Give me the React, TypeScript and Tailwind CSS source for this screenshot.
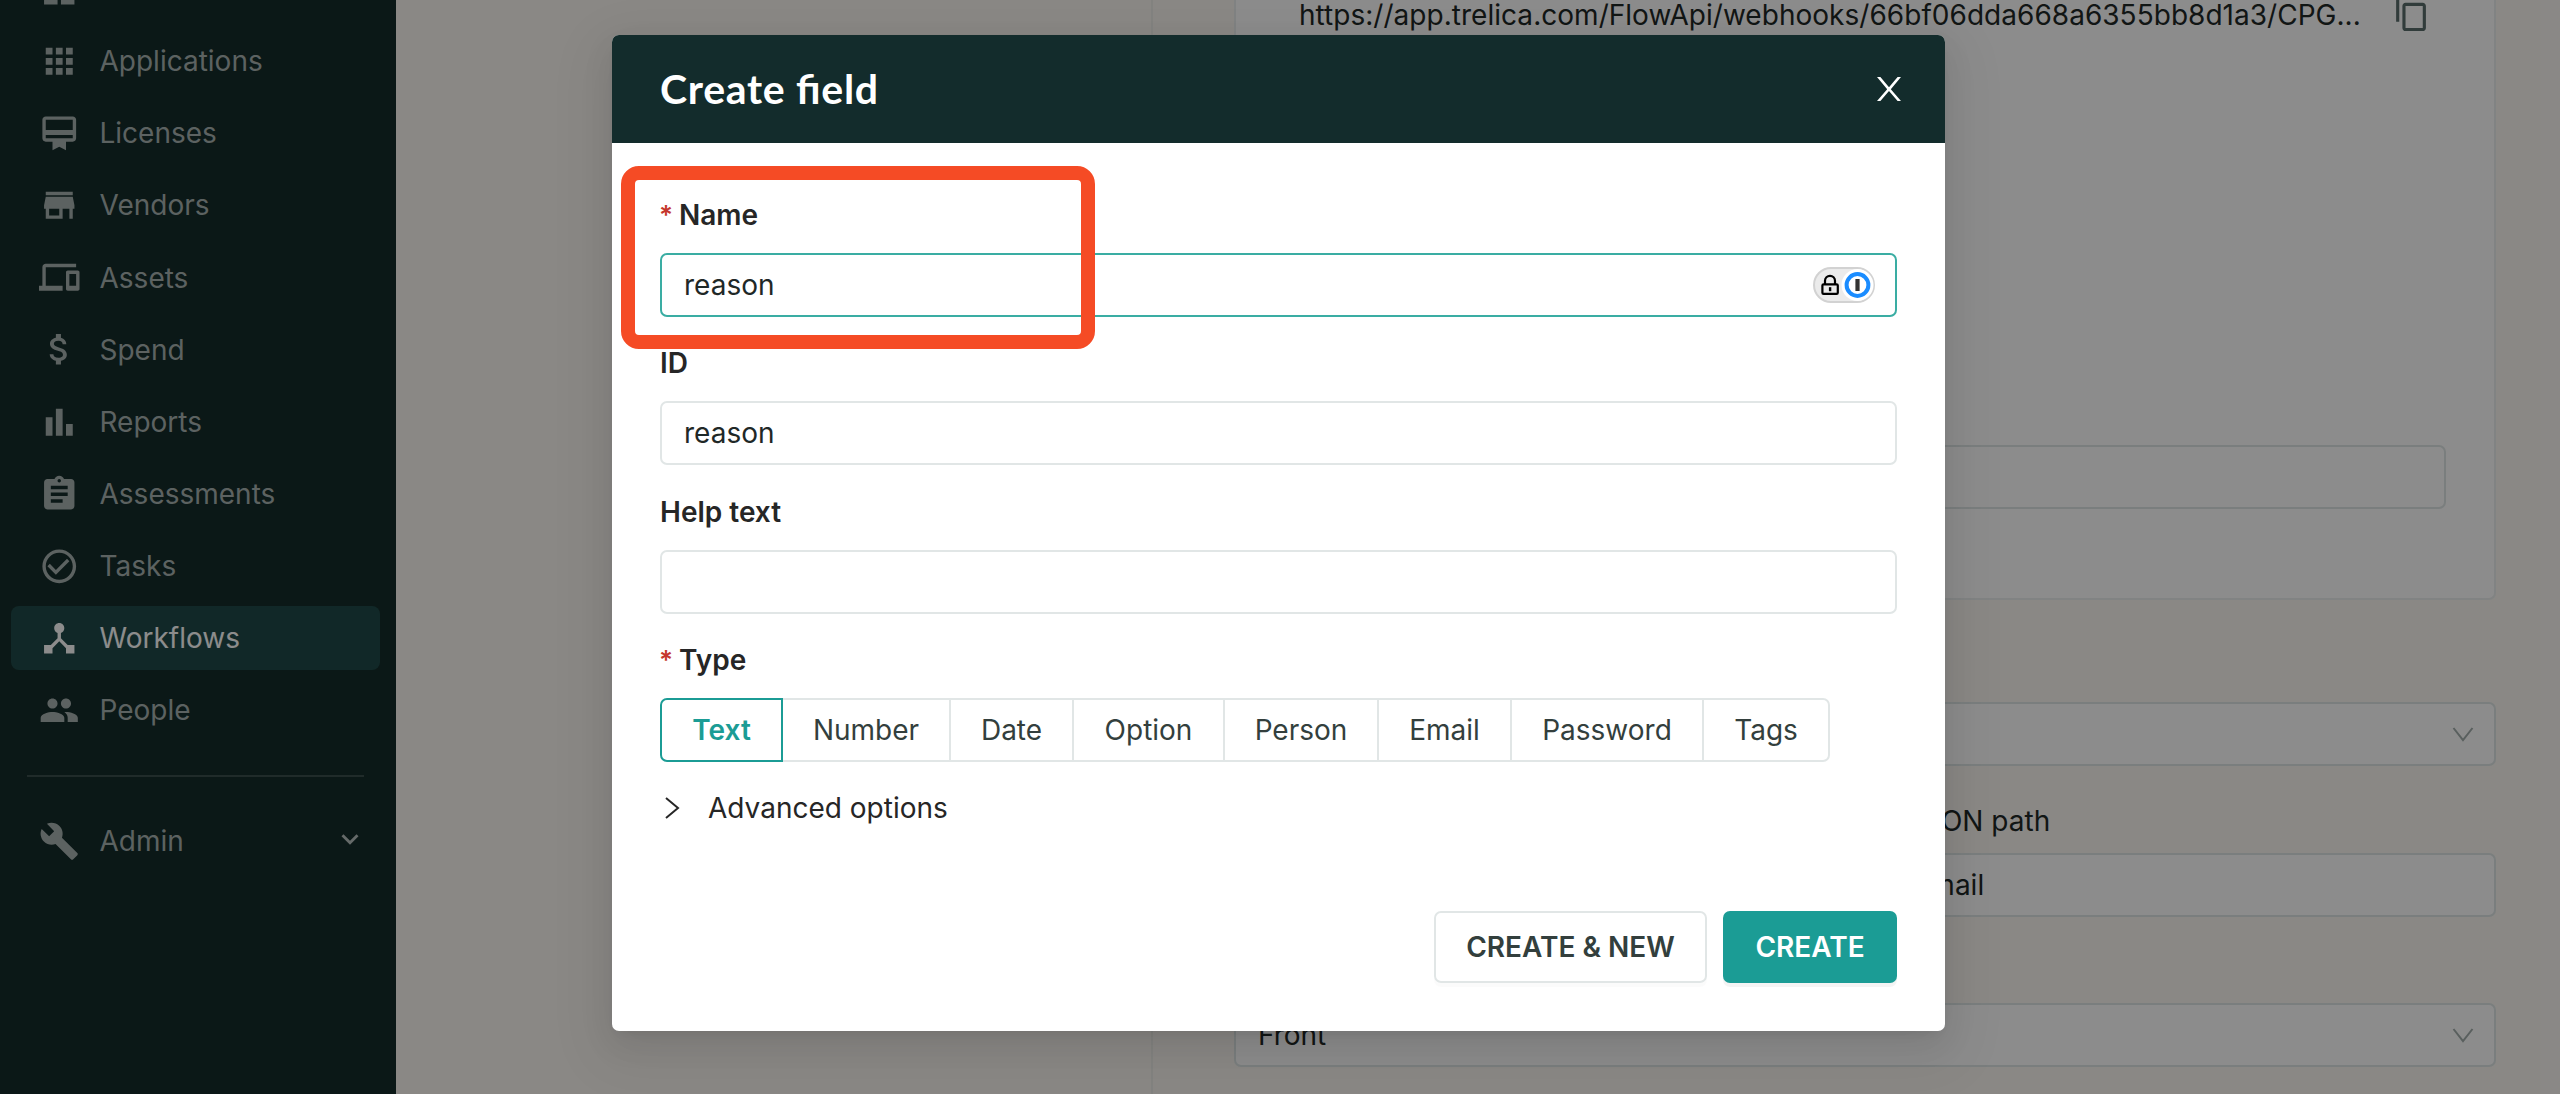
import type { ReactNode } from "react";
import { clsx } from "clsx";
import type { IconType } from "react-icons";
import {
  MdApps,
  MdAssignment,
  MdAttachMoney,
  MdBarChart,
  MdBuild,
  MdCardMembership,
  MdCheckCircleOutline,
  MdContentCopy,
  MdDashboard,
  MdDeviceHub,
  MdDevices,
  MdExpandMore,
  MdPeople,
  MdStore,
} from "react-icons/md";

type NavEntry = { label?: string; icon: IconType; active?: boolean };

const navItems: NavEntry[] = [
  { label: "Applications", icon: MdApps },
  { label: "Licenses", icon: MdCardMembership },
  { label: "Vendors", icon: MdStore },
  { label: "Assets", icon: MdDevices },
  { label: "Spend", icon: MdAttachMoney },
  { label: "Reports", icon: MdBarChart },
  { label: "Assessments", icon: MdAssignment },
  { label: "Tasks", icon: MdCheckCircleOutline },
  { label: "Workflows", icon: MdDeviceHub, active: true },
  { label: "People", icon: MdPeople },
];

const fieldTypes = [
  { label: "Text", width: "w-[123px]" },
  { label: "Number", width: "w-[168px]" },
  { label: "Date", width: "w-[123px]" },
  { label: "Option", width: "w-[151px]" },
  { label: "Person", width: "w-[154px]" },
  { label: "Email", width: "w-[133px]" },
  { label: "Password", width: "w-[192px]" },
  { label: "Tags", width: "w-[126px]" },
];

function NavItem({ label, icon: Icon, active }: NavEntry) {
  return (
    <a
      className={clsx(
        "flex h-16 shrink-0 items-center rounded-lg pl-[28px]",
        active ? "bg-[#204a49] text-white" : "text-[#a8b2b1]"
      )}
    >
      <Icon className="size-[40.5px] shrink-0" />
      <span className="ml-[20px]">{label}</span>
    </a>
  );
}

function Sidebar() {
  return (
    <aside className="flex w-[396px] shrink-0 flex-col bg-[#142c2a] text-[28px] leading-[44px]">
      <nav className="-mt-[43px] ml-[11px] flex w-[369px] flex-col gap-[8.15px]">
        <NavItem icon={MdDashboard} />
        {navItems.map((item) => (
          <NavItem key={item.label} {...item} />
        ))}
      </nav>
      <div className="mt-[32.5px] ml-[27px] h-[2px] w-[337px] bg-[#3b4f4d]" />
      <div className="mt-[32px] ml-[11px] flex w-[369px] items-center">
        <div className="flex-1">
          <NavItem label="Admin" icon={MdBuild} />
        </div>
        <MdExpandMore className="mr-[13px] mb-1 size-[34px] text-[#b9c1c0]" />
      </div>
    </aside>
  );
}

function DownArrow() {
  return (
    <svg className="h-[15px] w-[22px]" viewBox="0 0 22 15" fill="none">
      <path d="M1.5 1 11 13.2 20.5 1" stroke="#a3aeac" strokeWidth="2" />
    </svg>
  );
}

function Select({ value }: { value?: string }) {
  return (
    <div className="flex h-16 items-center justify-between rounded-[7px] border-2 border-[#dfe6e5] bg-white pr-[20px] pl-[22px]">
      <span>{value}</span>
      <DownArrow />
    </div>
  );
}

function WorkflowPage() {
  return (
    <main className="flex flex-1 bg-[#fbf8f3] text-[28px] leading-[44px] text-[#1f2827]">
      <div className="w-[757px] border-r-2 border-[#efeeea]" />
      <div className="ml-[81px] w-[1262px]">
        <section className="flex h-[600px] flex-col rounded-b-[7px] border-2 border-t-0 border-[#ecefee] bg-white px-[48px]">
          <div className="flex h-[37px] items-start pl-[15px]">
            <span className="w-[1062px] pt-px leading-[28px] tracking-[0.03px] whitespace-nowrap">
              https://app.trelica.com/FlowApi/webhooks/66bf06dda668a6355bb8d1a3/CPG...
            </span>
            <MdContentCopy className="-mt-[5px] ml-[32px] size-[37.6px] shrink-0 text-[#5a6d6c]" />
          </div>
          <div className="mt-[408px] h-16 shrink-0 rounded-[7px] border-2 border-[#dfe6e5]" />
        </section>
        <div className="mt-[102px]">
          <Select />
        </div>
        <div className="mt-[33px] flex gap-4">
          <div className="flex-1" />
          <div className="w-[632px]">
            <div className="pl-[43px]">JSON path</div>
            <div className="mt-[10px] flex h-16 items-center rounded-[7px] border-2 border-[#dfe6e5] bg-white pl-[22px]">
              $.email
            </div>
          </div>
        </div>
        <div className="mt-[86px]">
          <Select value="Front" />
        </div>
      </div>
    </main>
  );
}

function Field({ label, required, children }: { label: string; required?: boolean; children: ReactNode }) {
  return (
    <div>
      <div className="mb-4 flex h-[44px] font-semibold text-[#262626]">
        {required && <span className="mr-[9px] -ml-px w-[11px] text-[26px] text-[#c5372c]">*</span>}
        {label}
      </div>
      {children}
    </div>
  );
}

function TextInput({ value, focused, children }: { value?: string; focused?: boolean; children?: ReactNode }) {
  return (
    <div
      className={clsx(
        "flex h-16 items-center justify-between rounded-[7px] border-2 pr-[20px] pl-[22px]",
        focused ? "border-[#3aada3]" : "border-[#e1e6e6]"
      )}
    >
      <span>{value}</span>
      {children}
    </div>
  );
}

function PasswordManagerBadge() {
  return (
    <svg className="h-[36px] w-[62px]" viewBox="0 0 62 36" fill="none">
      <rect x="1" y="1" width="60" height="34" rx="17" fill="#ebebeb" stroke="#d2d2d2" strokeWidth="2" />
      <circle cx="44.5" cy="18" r="16" fill="#fff" />
      <circle cx="44.5" cy="18" r="10.9" fill="#fff" stroke="#1a8cff" strokeWidth="4" />
      <rect x="42.4" y="12" width="4.2" height="12" fill="#333" />
      <path d="M12 17v-3.2a5 5 0 0 1 10 0V17" stroke="#000" strokeWidth="2.2" />
      <rect x="9.4" y="17.3" width="15.4" height="9.6" rx="1.2" stroke="#000" strokeWidth="2.2" />
      <path d="M17.1 20.2v4" stroke="#000" strokeWidth="2.4" />
    </svg>
  );
}

function CreateFieldModal() {
  return (
    <div className="relative mt-[35px] ml-[612px] flex h-[996px] w-[1333px] flex-col overflow-hidden rounded-[7px] bg-white text-[28px] leading-[44px] text-[#1f2827] shadow-[0_12px_32px_0_rgba(0,0,0,0.08),0_6px_12px_-8px_rgba(0,0,0,0.12),0_18px_56px_16px_rgba(0,0,0,0.05)]">
      <header className="flex h-[108px] shrink-0 items-center justify-between bg-[#132c2c] pr-[44px] pl-[48px]">
        <h2 className="font-['Lato',sans-serif] text-[41px] font-bold tracking-[0.7px] text-white [font-feature-settings:'liga']">
          Create field
        </h2>
        <svg className="size-[24px]" viewBox="0 0 24 24" fill="#fff">
          <path d="M0 0h3.4L12 10.2 20.6 0H24L13.8 12.2 24 24h-3.4L12 14.1 3.4 24H0L10.2 12.2z" />
        </svg>
      </header>

      <div className="flex flex-1 flex-col pt-[50px] pr-[48px] pl-[48px]">
        <div className="flex flex-col gap-[24.4px]">
          <Field label="Name" required>
            <TextInput value="reason" focused>
              <PasswordManagerBadge />
            </TextInput>
          </Field>
          <Field label="ID">
            <TextInput value="reason" />
          </Field>
          <Field label="Help text">
            <TextInput />
          </Field>
          <Field label="Type" required>
            <div className="flex h-16">
              {fieldTypes.map((type, i) => (
                <button
                  key={type.label}
                  className={clsx(
                    "flex h-16 items-center justify-center border-y-2 border-r-2",
                    type.width,
                    i === 0
                      ? "rounded-l-[7px] border-l-2 border-[#1b9c95] font-semibold text-[#1b9c95]"
                      : "border-[#e1e6e6] text-[#333f3d]",
                    i === fieldTypes.length - 1 && "rounded-r-[7px]"
                  )}
                >
                  {type.label}
                </button>
              ))}
            </div>
          </Field>
        </div>

        <div className="mt-[24px] flex items-center text-[#262626]">
          <svg className="ml-[5px] h-[22px] w-[16px]" viewBox="0 0 16 22" fill="none">
            <path d="M1 1 13 11 1 21" stroke="#262626" strokeWidth="2" />
          </svg>
          <span className="ml-[27px]">Advanced options</span>
        </div>

        <footer className="mt-auto mb-[48px] flex justify-end gap-4 font-semibold">
          <button className="h-[72px] w-[273px] rounded-[7px] border-2 border-[#e1e6e6] text-[#333f3d] shadow-[0_4px_0_rgba(0,0,0,0.015)]">
            CREATE &amp; NEW
          </button>
          <button className="h-[72px] w-[174px] rounded-[7px] bg-[#1b9c95] text-white shadow-[0_4px_0_rgba(0,0,0,0.045)]">
            CREATE
          </button>
        </footer>
      </div>
    </div>
  );
}

export default function App() {
  return (
    <div className="relative flex h-[1094px] w-[2560px] overflow-hidden font-['Inter',sans-serif]">
      <Sidebar />
      <WorkflowPage />

      {/* Dimmed backdrop with the dialog */}
      <div className="absolute inset-0 flex items-start bg-black/45">
        <CreateFieldModal />
      </div>

      {/* Callout around the name field */}
      <div className="absolute top-[166px] left-[621px] h-[183px] w-[474px] rounded-[18px] border-[14px] border-[#f54b25]" />
    </div>
  );
}
